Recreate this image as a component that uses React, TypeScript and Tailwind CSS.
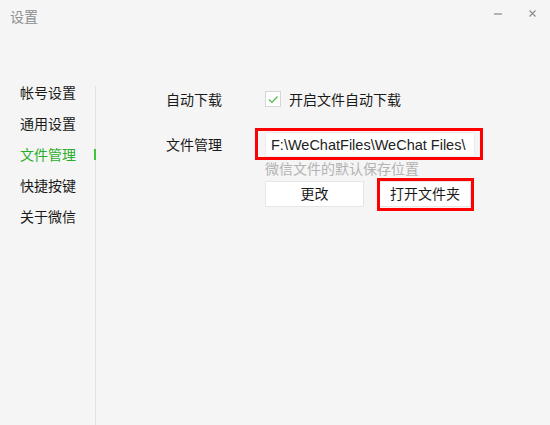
import React from "react";

const FONT = '"Liberation Sans", "Noto Sans CJK SC", sans-serif';

const navItems = ["帐号设置", "通用设置", "文件管理", "快捷按键", "关于微信"];

export default function App() {
  return (
    <div
      className="w-[550px] h-[425px] bg-[#f5f5f5] flex flex-col overflow-hidden text-[#1a1a1a]"
      style={{ fontFamily: FONT }}
    >
      {/* Title bar */}
      <div className="h-[86px] flex items-start justify-between shrink-0">
        <div className="pl-[10px] pt-[9px] text-[14px] leading-[16px] text-[#8f8f8f]">设置</div>
        <div className="flex items-center pr-[14px] pt-[10px] gap-[27px]">
          <div className="w-[8px] h-[2px] bg-[#b4b4b4]" />
          <svg width="7" height="7" viewBox="0 0 7 7">
            <path d="M0.5 0.5 L6.5 6.5 M6.5 0.5 L0.5 6.5" stroke="#8a8a8a" strokeWidth="1.1" fill="none" />
          </svg>
        </div>
      </div>

      {/* Body */}
      <div className="flex flex-1">
        {/* Sidebar */}
        <div className="w-[96px] shrink-0 border-r border-[#e2e2e2] flex flex-col gap-[17px] pt-0">
          {navItems.map((item) => {
            const active = item === "文件管理";
            return (
              <div
                key={item}
                className={
                  "relative pl-[20px] text-[14px] leading-[14px] " +
                  (active ? "text-[#2aae2a]" : "text-[#1a1a1a]")
                }
              >
                {item}
                {active && (
                  <div className="absolute left-[94px] top-[1px] w-[2px] h-[11px] bg-[#3cc63c]" />
                )}
              </div>
            );
          })}
        </div>

        {/* Content */}
        <div className="flex-1 pl-[70px] pt-[2px] flex flex-col gap-[20px]">
          {/* Row 1 */}
          <div className="flex items-center h-[24px]">
            <div className="w-[99px] shrink-0 text-[14px] leading-[14px]">自动下载</div>
            <div className="w-[16px] h-[16px] bg-white border border-[#d6d6d6] -mt-[3px] flex items-center justify-center">
              <svg width="14" height="14" viewBox="0 0 14 14">
                <path d="M3 7.5 L6 10.5 L11.5 4.5" stroke="#4cbb4c" strokeWidth="1.2" fill="none" />
              </svg>
            </div>
            <div className="ml-[8px] text-[14px] leading-[14px]">开启文件自动下载</div>
          </div>

          {/* Row 2 */}
          <div className="flex items-start">
            <div className="w-[99px] shrink-0 h-[25px] flex items-center text-[14px] leading-[14px]">文件管理</div>
            <div className="flex flex-col">
              <div className="relative w-[210px] h-[25px] bg-white border border-[#ececec] flex items-center pl-[5px] text-[14.5px] leading-[16px] text-[#222] whitespace-nowrap">
                F:\WeChatFiles\WeChat Files\
                <div className="absolute -left-[11px] -top-[5px] -right-[9px] -bottom-[4px] border-[3px] border-[#ff0000]" />
              </div>
              <div className="mt-[5px] text-[14px] leading-[14px] text-[#b3b3b3] whitespace-nowrap">微信文件的默认保存位置</div>
              <div className="mt-[5px] flex gap-[15px]">
                <div className="w-[99px] h-[26px] bg-white border border-[#e6e6e6] flex items-center justify-center text-[14px] leading-[14px]">
                  更改
                </div>
                <div className="relative w-[92px] h-[26px] bg-white border border-[#e6e6e6] flex items-center justify-center text-[14px] leading-[14px]">
                  打开文件夹
                  <div className="absolute -left-[3px] -top-[4px] -right-[4px] -bottom-[5px] border-[3px] border-[#ff0000]" />
                </div>
              </div>
            </div>
          </div>
        </div>
      </div>
    </div>
  );
}
